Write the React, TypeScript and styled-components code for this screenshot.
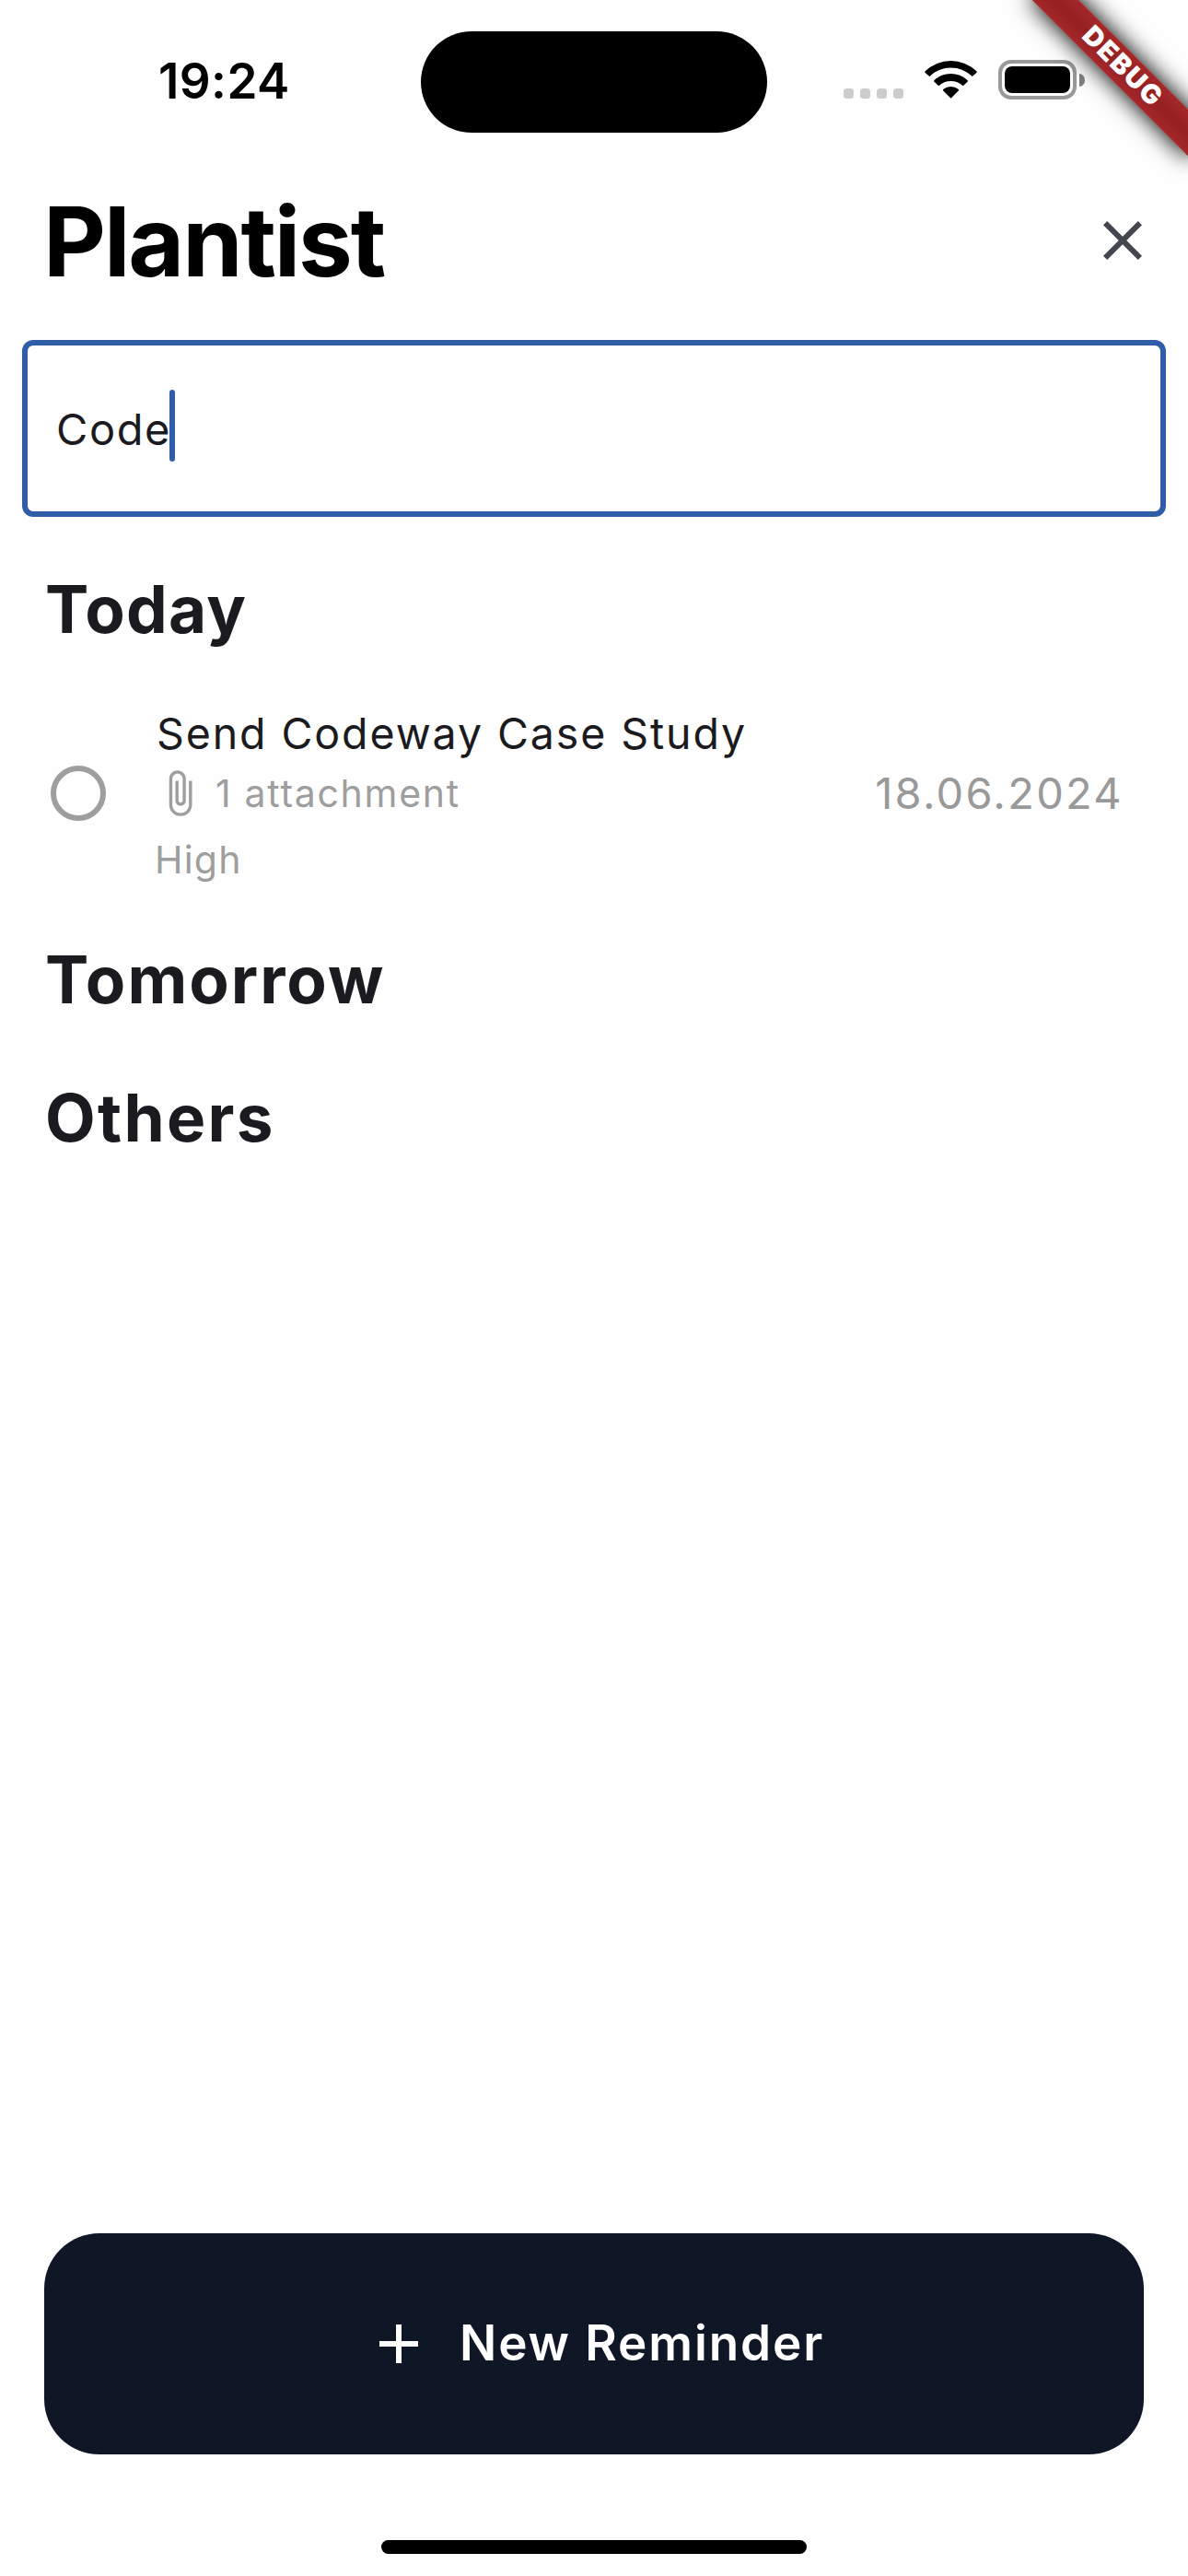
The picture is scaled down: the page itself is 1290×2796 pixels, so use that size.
import React from "react";
import styled, { createGlobalStyle } from "styled-components";

const ink = "#1b1b1f";
const muted = "#9e9e9e";
const accent = "#2f5da8";

const GlobalStyle = createGlobalStyle`
  *, *::before, *::after { box-sizing: border-box; }
  body {
    margin: 0;
    background: #fefefe;
    font-family: Inter, "Liberation Sans", sans-serif;
    -webkit-font-smoothing: antialiased;
  }
  h1, h2, p { margin: 0; }
  button { font: inherit; border: 0; padding: 0; background: none; }
`;

const Screen = styled.div`
  position: relative;
  width: 1290px;
  height: 2796px;
  overflow: hidden;
  display: flex;
  flex-direction: column;
  background: #fefefe;
  color: ${ink};
`;

const StatusBar = styled.header`
  height: 177px;
  flex: none;
  display: grid;
  grid-template-columns: 457px 376px 457px;
  align-items: start;
`;

const Clock = styled.div`
  padding: 57px 0 0 172px;
  font-size: 53px;
  line-height: 62px;
  font-weight: 600;
  letter-spacing: 0.4px;
  color: #000;
`;

const Island = styled.div`
  height: 110px;
  margin-top: 34px;
  border-radius: 55px;
  background: #000;
`;

const Indicators = styled.div`
  display: flex;
  align-items: flex-end;
  height: 108px;
  padding-left: 83px;
`;

const Signal = styled.div`
  display: flex;
  gap: 7px;
  margin: 0 23px 1px 0;
`;

const Dot = styled.i`
  width: 11px;
  height: 11px;
  border-radius: 3.5px;
  background: #ccc;
`;

const Wifi = styled.svg`
  display: block;
  margin: 0 23px 1px 0;
`;

const Battery = styled.div`
  width: 85px;
  height: 43px;
  padding: 3px;
  border: 4px solid #999;
  border-radius: 14px;
`;

const Charge = styled.div`
  height: 29px;
  border-radius: 8px;
  background: #000;
`;

const Nub = styled.div`
  width: 6px;
  height: 14px;
  margin: 0 0 14px 3px;
  border-radius: 0 6px 6px 0 / 0 7px 7px 0;
  background: #808080;
`;

const TitleBar = styled.div`
  height: 168px;
  margin-bottom: 24px;
  padding: 0 35px 0 47px;
  display: flex;
  align-items: center;
  justify-content: space-between;
`;

const Title = styled.h1`
  padding-top: 2px;
  font-size: 105px;
  line-height: 126px;
  font-weight: 700;
  letter-spacing: -2.1px;
  color: #000;
`;

const IconButton = styled.button`
  display: flex;
  color: #44464f;
`;

const Icon = styled.svg<{ $size: number }>`
  display: block;
  flex: none;
  width: ${(p) => p.$size}px;
  height: ${(p) => p.$size}px;
  fill: currentColor;
`;

const SearchField = styled.div`
  height: 192px;
  flex: none;
  margin: 0 24px 36px;
  padding: 0 31px;
  display: flex;
  align-items: center;
  border: 6px solid ${accent};
  border-radius: 12px;
`;

const Query = styled.span`
  width: 123px;
  padding-top: 2px;
  white-space: nowrap;
  font-size: 47px;
  line-height: 56px;
  letter-spacing: 1.6px;
`;

const Caret = styled.i`
  width: 6px;
  height: 78px;
  margin-bottom: 6px;
  border-radius: 3px;
  background: ${accent};
`;

const Sections = styled.main`
  flex: 1;
  display: flex;
  flex-direction: column;
`;

const Heading = styled.h2<{ $tracking: number }>`
  height: 90px;
  margin: 19px 49px 41px;
  font-size: 71px;
  line-height: 90px;
  font-weight: 700;
  letter-spacing: ${(p) => p.$tracking}px;
`;

const Item = styled.article`
  height: 228px;
  margin-bottom: 24px;
  padding: 0 70px 0 55px;
  display: flex;
  align-items: center;
`;

const Radio = styled.span`
  width: 60px;
  height: 60px;
  margin-right: 53px;
  border: 6px solid ${muted};
  border-radius: 50%;
`;

const Details = styled.div`
  flex: 1;
  display: flex;
  flex-direction: column;
`;

const ItemTitle = styled.p`
  height: 84px;
  padding: 13px 0 0 2px;
  font-size: 46.5px;
  line-height: 72px;
  letter-spacing: 1.9px;
`;

const Meta = styled.p<{ $height: number; $tracking: number }>`
  height: ${(p) => p.$height}px;
  display: flex;
  align-items: center;
  gap: 12px;
  font-size: 41px;
  line-height: 60px;
  letter-spacing: ${(p) => p.$tracking}px;
  color: ${muted};
`;

const DueDate = styled.time`
  font-size: 47px;
  line-height: 60px;
  letter-spacing: 2.3px;
  color: #999;
`;

const NewButton = styled.button`
  height: 240px;
  flex: none;
  margin: 0 48px 93px;
  border-radius: 60px;
  background: #0f1626;
  color: #fff;
  display: flex;
  align-items: center;
  padding-left: 349px;
  gap: 30px;
  font-size: 53px;
  line-height: 72px;
  font-weight: 600;
  letter-spacing: 1.9px;
`;

const ButtonLabel = styled.span`
  padding-bottom: 2px;
`;

const HomeIndicator = styled.div`
  width: 462px;
  height: 15px;
  flex: none;
  margin: 0 auto 24px;
  border-radius: 7.5px;
  background: #000;
`;

const Ribbon = styled.div`
  position: absolute;
  top: 54px;
  right: -48px;
  width: 240px;
  height: 36px;
  padding: 0 0 3px 2px;
  transform: rotate(45deg);
  display: flex;
  align-items: center;
  justify-content: center;
  background: linear-gradient(#a52829, #951f21 50%, #a52829);
  box-shadow: 0 0 26px 1px #000;
  color: #fff;
  font-size: 29px;
  font-weight: 900;
  letter-spacing: 1.8px;
  line-height: 34px;
`;

export default function App() {
  return (
    <Screen>
      <GlobalStyle />
      <StatusBar>
        <Clock>19:24</Clock>
        <Island />
        <Indicators>
          <Signal>
            <Dot />
            <Dot />
            <Dot />
            <Dot />
          </Signal>
          <Wifi width="57" height="42" viewBox="0 0 58 42">
            <path d="M0.6 12.2 A40.5 40.5 0 0 1 57.4 12.2 Q58 13 57.3 13.8 L52.6 18 A33.5 33.5 0 0 0 5.4 18 L0.7 13.8 Q0 13 0.6 12.2Z" />
            <path d="M10.5 22.2 A27 27 0 0 1 47.5 22.2 Q48 23 47.4 23.8 L42.4 28.3 A19.5 19.5 0 0 0 15.6 28.3 L10.6 23.8 Q10 23 10.5 22.2Z" />
            <path d="M20.5 32.2 A13 13 0 0 1 37.5 32.2 Q38 33 37.4 33.6 L29 42 L20.6 33.6 Q20 33 20.5 32.2Z" />
          </Wifi>
          <Battery>
            <Charge />
          </Battery>
          <Nub />
        </Indicators>
      </StatusBar>
      <TitleBar>
        <Title>Plantist</Title>
        <IconButton aria-label="Close">
          <Icon $size={72} viewBox="0 0 24 24">
            <path d="M19 6.41 17.59 5 12 10.59 6.41 5 5 6.41 10.59 12 5 17.59 6.41 19 12 13.41 17.59 19 19 17.59 13.41 12z" />
          </Icon>
        </IconButton>
      </TitleBar>
      <SearchField>
        <Query>Code</Query>
        <Caret />
      </SearchField>
      <Sections>
        <Heading $tracking={1.3}>Today</Heading>
        <Item>
          <Radio />
          <Details>
            <ItemTitle>Send Codeway Case Study</ItemTitle>
            <Meta $height={60} $tracking={1.7}>
              <Icon $size={54} viewBox="0 0 24 24">
                <path d="M16.5 6v11.5c0 2.21-1.79 4-4 4s-4-1.79-4-4V5c0-1.38 1.12-2.5 2.5-2.5s2.5 1.12 2.5 2.5v10.5c0 .55-.45 1-1 1s-1-.45-1-1V6H10v9.5c0 1.38 1.12 2.5 2.5 2.5s2.5-1.12 2.5-2.5V5c0-2.21-1.79-4-4-4S7 2.79 7 5v12.5c0 3.04 2.46 5.5 5.5 5.5s5.5-2.46 5.5-5.5V6h-1.5z" />
              </Icon>
              1 attachment
            </Meta>
            <Meta $height={84} $tracking={1.2}>High</Meta>
          </Details>
          <DueDate>18.06.2024</DueDate>
        </Item>
        <Heading $tracking={2}>Tomorrow</Heading>
        <Heading $tracking={2.3}>Others</Heading>
      </Sections>
      <NewButton>
        <Icon $size={72} viewBox="0 0 24 24">
          <path d="M19 13h-6v6h-2v-6H5v-2h6V5h2v6h6v2z" />
        </Icon>
        <ButtonLabel>New Reminder</ButtonLabel>
      </NewButton>
      <HomeIndicator />
      <Ribbon>DEBUG</Ribbon>
    </Screen>
  );
}
